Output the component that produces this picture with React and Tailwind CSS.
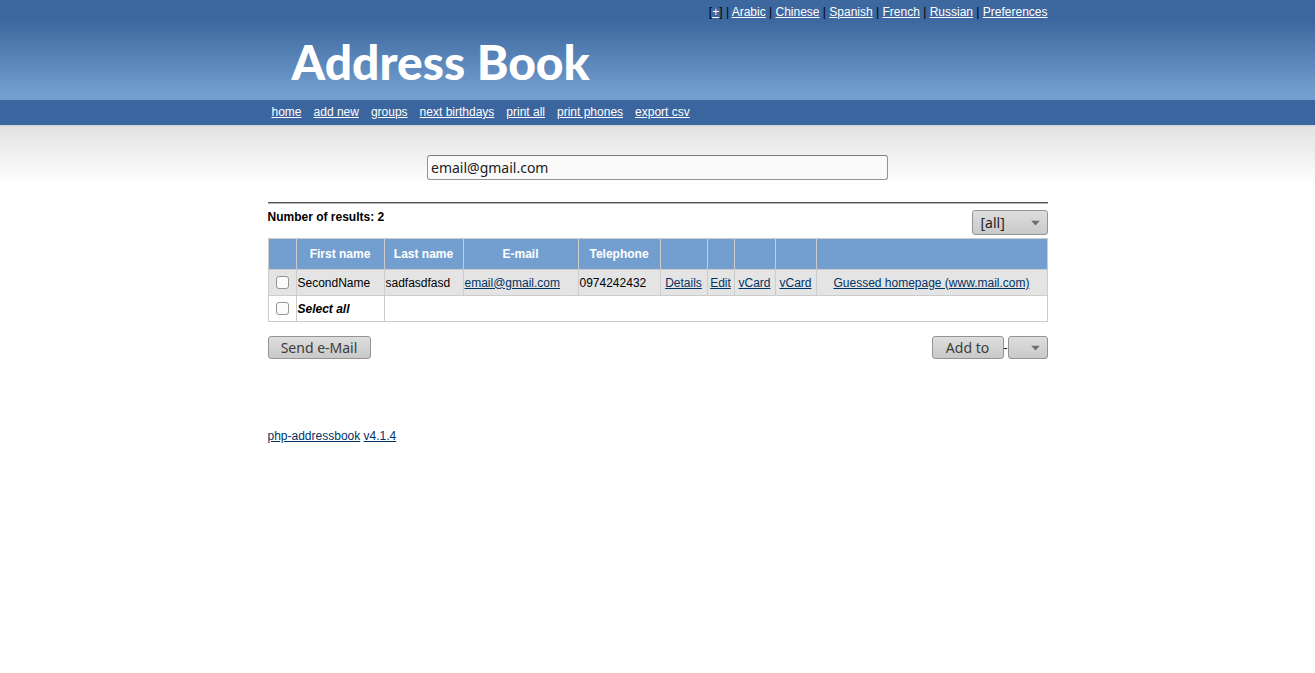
import React from "react";

const languages = ["Arabic", "Chinese", "Spanish", "French", "Russian", "Preferences"];
const menu = ["home", "add new", "groups", "next birthdays", "print all", "print phones", "export csv"];
const heads = ["", "First name", "Last name", "E-mail", "Telephone", "", "", "", "", ""];
const columns = [
  "w-[28px]",
  "w-[88px]",
  "w-[79px]",
  "w-[115px]",
  "w-[82px]",
  "w-[47px]",
  "w-[27px]",
  "w-[41px]",
  "w-[41px]",
  "",
];

const cell = "border border-[#cccccc] p-px";
const link = "text-[#003366] underline";
const face =
  "rounded-[3px] border border-[#949494] bg-linear-to-b from-[#dedede] to-[#c9c9c9] font-['Noto_Sans',sans-serif]";

function Container({ className = "", children }) {
  return <div className={`mx-auto w-full max-w-[780px] ${className}`}>{children}</div>;
}

function Check({ label }) {
  return (
    <input
      type="checkbox"
      aria-label={label}
      className="mx-auto block size-[13px] appearance-none rounded-[3px] border border-[#949494] bg-[#fcfcfc] checked:bg-[#3b659e]"
    />
  );
}

function Dropdown({ label, className, children }) {
  return (
    <span className={`relative flex ${className}`}>
      <select aria-label={label} className={`h-full w-full appearance-none pl-2 text-[14px] leading-5 text-[#222222] ${face}`}>
        {children}
      </select>
      <svg
        aria-hidden="true"
        viewBox="0 0 9 5"
        className="pointer-events-none absolute top-1/2 right-2 h-[5px] w-[9px] -translate-y-1/2"
      >
        <path d="M0 0h9L4.500 5z" fill="#6e6e6e" />
      </svg>
    </span>
  );
}

export default function App() {
  return (
    <div className="min-h-screen bg-white font-['Liberation_Sans',Arial,sans-serif] text-[12px] leading-4 text-black">
      <header className="h-[100px] bg-linear-to-b from-[#3d689f] from-20% to-[#739fd0] to-95%">
        <Container>
          <div className="pt-1 text-right">
            [<a href="#more" className="text-white underline">+</a>]
            {languages.map((name) => (
              <React.Fragment key={name}>
                {" | "}
                <a href={`#${name}`} className="text-white underline">
                  {name}
                </a>
              </React.Fragment>
            ))}
          </div>
          <h1 className="pt-3 pl-6 font-['Lato',sans-serif] text-[48px] leading-[60px] font-black text-white">Address Book</h1>
        </Container>
      </header>

      <nav className="bg-[#3b659e]">
        <Container className="flex h-[25px] items-start gap-3 px-1 pt-1">
          {menu.map((name) => (
            <a key={name} href={`#${name.replace(" ", "-")}`} className="text-white underline">
              {name}
            </a>
          ))}
        </Container>
      </nav>

      <main className="border-t-2 border-[#d6d9e0] bg-linear-to-b from-[#e3e3e3] to-white to-[58px] pt-7">
        <Container>
          <input
            type="text"
            aria-label="Search"
            defaultValue="email@gmail.com"
            className="mx-auto block h-[25px] w-[461px] max-w-full rounded-[3px] border border-[#949494] border-t-[#7d7d7d] bg-[#fafafa] px-[3px] font-['Noto_Sans',sans-serif] text-[14px] leading-5 text-[#222222]"
          />
          <hr className="mt-[22px] h-[2px] border-t border-b border-t-[#555555] border-b-[#b5b5b5]" />
          <div className="flex items-start justify-between pt-[6px]">
            <b className="block leading-[14px]">Number of results: 2</b>
            <Dropdown label="Group" className="h-[25px] w-[76px]">
              <option>[all]</option>
            </Dropdown>
          </div>

          <table className="mt-[3px] w-full table-fixed border-collapse">
            <colgroup>
              {columns.map((width, i) => (
                <col key={i} className={width} />
              ))}
            </colgroup>
            <thead>
              <tr className="h-[31px] bg-[#739fd0] text-white">
                {heads.map((name, i) => (
                  <th key={i} className={cell}>
                    {name}
                  </th>
                ))}
              </tr>
            </thead>
            <tbody>
              <tr className="h-[26px] bg-[#e4e4e4]">
                <td className={cell}>
                  <Check label="Select SecondName" />
                </td>
                <td className={cell}>SecondName</td>
                <td className={cell}>sadfasdfasd</td>
                <td className={cell}>
                  <a href="#email" className={link}>email@gmail.com</a>
                </td>
                <td className={cell}>0974242432</td>
                {["Details", "Edit", "vCard", "vCard", "Guessed homepage (www.mail.com)"].map((name, i) => (
                  <td key={i} className={`${cell} text-center whitespace-nowrap`}>
                    <a href="#entry" className={link}>
                      {name}
                    </a>
                  </td>
                ))}
              </tr>
              <tr className="h-[26px]">
                <td className={cell}>
                  <Check label="Select all" />
                </td>
                <td className={cell}>
                  <b>
                    <i>Select all</i>
                  </b>
                </td>
                <td className={cell} colSpan={8}></td>
              </tr>
            </tbody>
          </table>

          <div className="flex items-start justify-between pt-[14px]">
            <button type="button" className={`h-[23px] w-[103px] text-[14px] leading-5 text-[#3c3c3c] ${face}`}>
              Send e-Mail
            </button>
            <div className="flex items-center">
              <button type="button" className={`h-[23px] w-[72px] text-[14px] leading-5 text-[#3c3c3c] ${face}`}>
                Add to
              </button>
              <span>-</span>
              <Dropdown label="Target group" className="h-[23px] w-[40px]">
                <option></option>
              </Dropdown>
            </div>
          </div>
        </Container>
      </main>

      <footer className="pt-[69px]">
        <Container>
          <a href="#project" className={link}>php-addressbook</a>{" "}
          <a href="#version" className={link}>v4.1.4</a>
        </Container>
      </footer>
    </div>
  );
}
